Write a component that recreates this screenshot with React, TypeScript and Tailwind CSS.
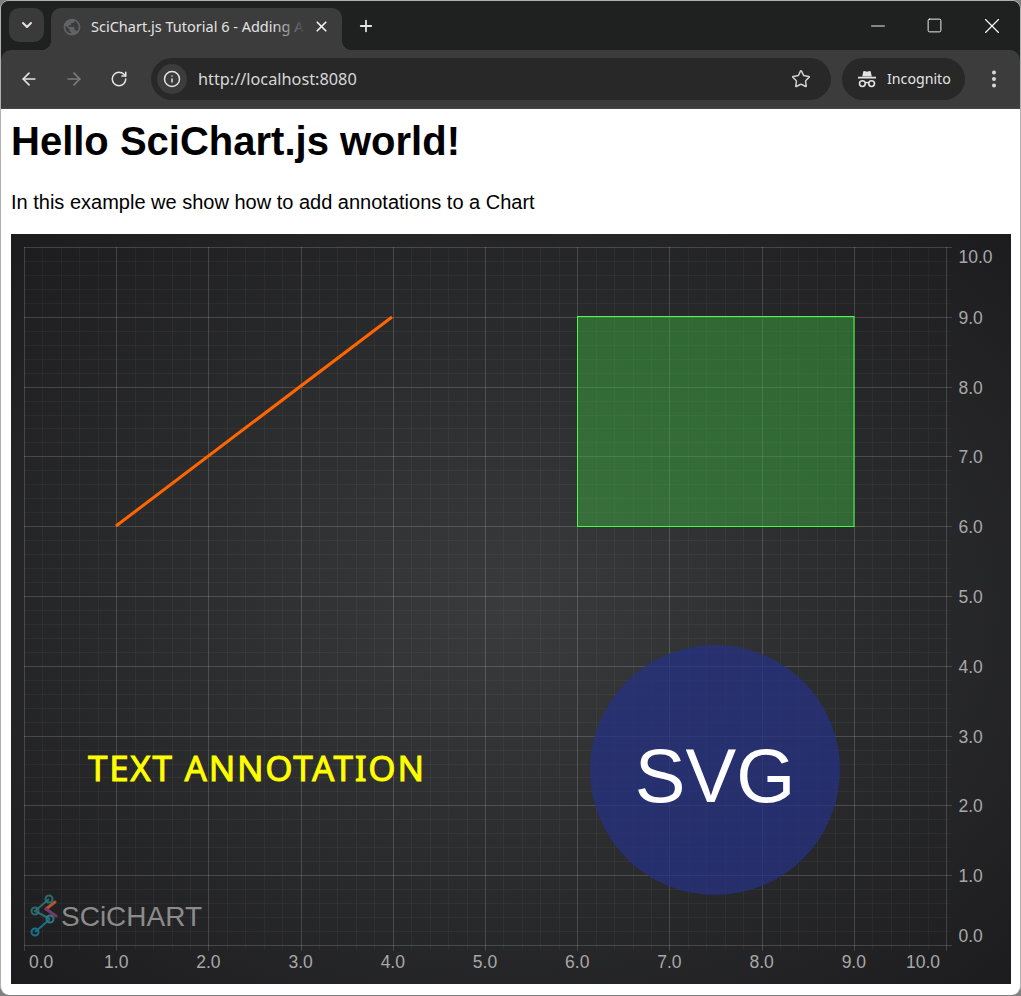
import {ArrowLeft, ArrowRight, ChevronDown, EllipsisVertical, Info, Minus, Plus, RotateCw, Square, Star, X} from "lucide-react";
import {MdPublic} from "react-icons/md";

const ticks = [0, 1, 2, 3, 4, 5, 6, 7, 8, 9, 10];
const minorSteps = [1, 2, 3, 4];

const px = (i: number) => 13 + i * 92.2;
const py = (i: number) => 711 - i * 69.8;
const crisp = (v: number) => Math.round(v) + 0.5;

function IncognitoIcon() {
    return (
        <svg width="20" height="20" viewBox="0 0 20 20" fill="none">
            <path d="M5.2 7.6 6.3 2.6c.1-.4.5-.6.9-.5l2.8.7 2.8-.7c.4-.1.8.1.9.5l1.1 5Z" fill="#e3e3e3" />
            <path d="M1 8.6h18" stroke="#e3e3e3" strokeWidth="1.6" />
            <circle cx="5.4" cy="14.6" r="2.9" stroke="#e3e3e3" strokeWidth="1.6" />
            <circle cx="14.6" cy="14.6" r="2.9" stroke="#e3e3e3" strokeWidth="1.6" />
            <path d="M8.2 14c1.1-.7 2.5-.7 3.6 0" stroke="#e3e3e3" strokeWidth="1.4" />
        </svg>
    );
}

function TabStrip() {
    return (
        <div className="flex h-[49px] items-start bg-[#1f2120] pl-2">
            <div className="mt-[7px] flex h-[34px] w-[35px] items-center justify-center rounded-[10px] bg-[#3a3a3a] text-[#e3e3e3]">
                <ChevronDown size={16} strokeWidth={3} />
            </div>
            <div className="relative ml-[7px] mt-[7px] flex h-[42px] w-[291px] items-center rounded-t-[10px] bg-[#3c3c3c] pb-[5px] pl-[11px]">
                <span className="absolute bottom-0 -left-2.5 size-2.5 bg-[radial-gradient(circle_at_0_0,#1f2120_10px,#3c3c3c_10.5px)]" />
                <span className="absolute bottom-0 -right-2.5 size-2.5 bg-[radial-gradient(circle_at_100%_0,#1f2120_10px,#3c3c3c_10.5px)]" />
                <MdPublic size={20} className="shrink-0 text-[#606367]" />
                <div className="relative ml-[9px] w-[214px] whitespace-nowrap font-['Noto_Sans',sans-serif] text-[14.5px] text-[#e3e3e3]">
                    SciChart.js Tutorial 6 - Adding A
                    <span className="absolute inset-y-0 right-0 w-8 bg-gradient-to-r from-transparent to-[#3c3c3c]" />
                </div>
                <X size={17} strokeWidth={2.4} className="ml-2 text-[#f0f0f0]" />
            </div>
            <div className="ml-2.5 flex h-[49px] w-7 items-center justify-center text-[#e3e3e3]">
                <Plus size={18} strokeWidth={2.4} />
            </div>
            <div className="ml-auto flex">
                <div className="flex h-[49px] w-[57px] items-center justify-center text-white"><Minus size={22} strokeWidth={1} /></div>
                <div className="flex h-[49px] w-[57px] items-center justify-center text-white"><Square size={17} strokeWidth={1.3} /></div>
                <div className="flex h-[49px] w-[57px] items-center justify-center text-white"><X size={26} strokeWidth={1} /></div>
            </div>
        </div>
    );
}

function Toolbar() {
    return (
        <div className="flex h-[59px] items-center rounded-t-[10px] border-b border-[#4a4a4a] bg-[#3c3c3c] pl-[5px]">
            <div className="flex w-[45px] justify-center text-[#e3e3e3]"><ArrowLeft size={20} strokeWidth={2} /></div>
            <div className="flex w-[45px] justify-center text-[#7b7b7b]"><ArrowRight size={20} strokeWidth={2} /></div>
            <div className="flex w-[45px] justify-center text-[#e3e3e3]"><RotateCw size={18} strokeWidth={2} /></div>
            <div className="ml-[10px] flex h-[42px] w-[680px] items-center rounded-full bg-[#282828] pl-[6px] pr-[20px]">
                <div className="flex size-[30px] items-center justify-center rounded-full bg-[#3c3c3c] text-[#e3e3e3]">
                    <Info size={18} strokeWidth={2} />
                </div>
                <span className="ml-[11px] font-['Noto_Sans',sans-serif] text-[16.3px] text-[#d8d8d8]">http://localhost:8080</span>
                <Star size={20} strokeWidth={1.8} className="ml-auto text-[#d0d0d0]" />
            </div>
            <div className="ml-[11px] flex h-[42px] w-[123px] items-center rounded-full bg-[#282828] pl-[15px]">
                <IncognitoIcon />
                <span className="ml-[10px] font-['Noto_Sans',sans-serif] text-[14.2px] text-[#e3e3e3]">Incognito</span>
            </div>
            <div className="ml-[7px] flex w-[44px] justify-center text-[#d8d8d8]"><EllipsisVertical size={22} strokeWidth={2.4} /></div>
        </div>
    );
}

function Chart() {
    return (
        <div className="h-[750px] w-[1000px] bg-[radial-gradient(ellipse_at_center,#3a3b3d_0%,#1c1c1e_100%)]">
            <svg width="1000" height="750" viewBox="0 0 1000 750" className="block">
                {/* minor grid */}
                {ticks.slice(0, 10).flatMap(i => minorSteps.map(m => (
                    <g key={`m${i}-${m}`}>
                        <line x1={crisp(px(i + m / 5))} x2={crisp(px(i + m / 5))} y1={13} y2={716} stroke="#ffffff" strokeOpacity={0.04} />
                        <line x1={13} x2={940} y1={crisp(py(i + m / 5))} y2={crisp(py(i + m / 5))} stroke="#ffffff" strokeOpacity={0.04} />
                    </g>
                )))}
                {/* major grid */}
                {ticks.map(i => (
                    <g key={i}>
                        <line x1={crisp(px(i))} x2={crisp(px(i))} y1={13} y2={717} stroke="#ffffff" strokeOpacity={0.16} />
                        <line x1={13} x2={941} y1={crisp(py(i))} y2={crisp(py(i))} stroke="#ffffff" strokeOpacity={0.16} />
                    </g>
                ))}

                <line x1={105} y1={292} x2={381} y2={83} stroke="#ff6600" strokeWidth={3} />
                <rect x={566.5} y={82.5} width={276.5} height={210} fill="#3cb03e" fillOpacity={0.47} stroke="#44ff44" strokeWidth={1} />

                <circle cx={704} cy={536} r={125} fill="#253283" fillOpacity={0.75} />
                <text x={704} y={568} textAnchor="middle" fill="#ffffff" className="font-['Liberation_Sans',sans-serif] text-[76px]">SVG</text>

                <text x={77} y={547} textLength={336} lengthAdjust="spacing" fill="#ffff00" stroke="#ffff00" strokeWidth={0.9} className="font-['Comic_Sans_MS','Noto_Sans',sans-serif] text-[35px]">TEXT ANNOTATION</text>

                {/* x axis labels */}
                {ticks.map(i => (
                    <text
                        key={i}
                        x={i === 0 ? 18 : i === 10 ? 912 : px(i)}
                        y={734}
                        textAnchor={i === 0 ? "start" : "middle"}
                        fill="#a8a8a8"
                        className="font-['Liberation_Sans',sans-serif] text-[17.5px]"
                    >
                        {i.toFixed(1)}
                    </text>
                ))}
                {/* y axis labels */}
                {ticks.map(i => (
                    <text
                        key={i}
                        x={947.5}
                        y={i === 10 ? 29 : i === 0 ? 708 : py(i) + 7}
                        fill="#a8a8a8"
                        className="font-['Liberation_Sans',sans-serif] text-[17.5px]"
                    >
                        {i.toFixed(1)}
                    </text>
                ))}

                {/* logo */}
                <g fill="none" strokeWidth={2} opacity={0.85}>
                    <path d="M38 665 24 677 39 685" stroke="#2f8a8f" strokeOpacity={0.85} />
                    <path d="M39 685 24 698" stroke="#1a7f9f" />
                    <path d="M44 668 35 675" stroke="#c0603a" strokeWidth={3} strokeLinecap="round" />
                    <path d="M35 675 45 682" stroke="#8a3a7a" strokeWidth={3} strokeLinecap="round" />
                    <circle cx={38} cy={665} r={3.5} stroke="#2f8a8f" strokeOpacity={0.85} />
                    <circle cx={24} cy={677} r={3.5} stroke="#2f8a8f" strokeOpacity={0.85} />
                    <circle cx={39} cy={685} r={3.5} stroke="#2f8a8f" />
                    <circle cx={24} cy={698} r={3.5} stroke="#1a7f9f" />
                </g>
                <text x={50} y={692} fill="#8b8b8b" className="font-['Liberation_Sans',sans-serif] text-[28px]">SCiCHART</text>
            </svg>
        </div>
    );
}

export default function App() {
    return (
        <div className="h-[996px] w-[1021px] overflow-hidden bg-[#808080]">
            <div className="h-[995px] overflow-hidden rounded-[9px] border border-b-0 border-[#b0b0b0] bg-white">
                <div className="bg-[#1f2120]">
                    <TabStrip />
                    <Toolbar />
                </div>
                <div className="pl-2.5 pt-[9px] text-black">
                    <h1 className="font-['Liberation_Sans',sans-serif] text-[40px] font-bold leading-[46px]">Hello SciChart.js world!</h1>
                    <p className="mt-[27px] font-['Liberation_Sans',sans-serif] text-[20px] leading-[23px]">In this example we show how to add annotations to a Chart</p>
                    <div className="mt-5">
                        <Chart />
                    </div>
                </div>
            </div>
        </div>
    );
}
